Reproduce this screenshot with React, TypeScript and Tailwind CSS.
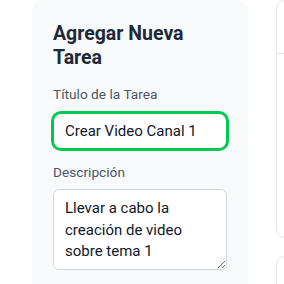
export default function App() {
  return (
    <div
      className="flex items-start gap-[28px] pl-8 w-[284px] h-[284px] overflow-hidden bg-white"
      style={{ fontFamily: 'Roboto, "Noto Sans", sans-serif' }}
    >
      <div className="w-[216px] h-[330px] shrink-0 bg-gray-50 rounded-xl px-[21px] pt-[22px]">
        <h2 className="text-[19.5px] leading-6 font-bold text-gray-800 mb-[14px]">Agregar Nueva Tarea</h2>

        <label className="block text-[13.7px] leading-5 text-gray-600 mb-[9px]">Título de la Tarea</label>
        <input
          type="text"
          defaultValue="Crear Video Canal 1"
          className="block w-full h-[36px] px-[11px] py-[5px] text-[15px] leading-6 text-gray-900 bg-white border border-green-500 ring-2 ring-green-500 rounded-lg outline-none"
        />

        <label className="block text-[13.7px] leading-5 text-gray-600 mt-[13px] mb-[7px]">Descripción</label>
        <textarea
          defaultValue="Llevar a cabo la creación de video sobre tema 1"
          className="block w-full h-[81px] px-[11px] pt-2 text-[15px] leading-[21.5px] text-gray-900 bg-white border border-gray-300 rounded-md outline-none"
        />
      </div>

      <div className="flex flex-col gap-[18px] shrink-0">
        <div className="w-[240px] h-[238px] shrink-0 bg-white border border-gray-200 rounded-lg">
          <div className="h-[53px] border-b border-gray-200" />
        </div>
        <div className="w-[240px] h-[120px] shrink-0 bg-white border border-gray-200 rounded-lg" />
      </div>
    </div>
  );
}
